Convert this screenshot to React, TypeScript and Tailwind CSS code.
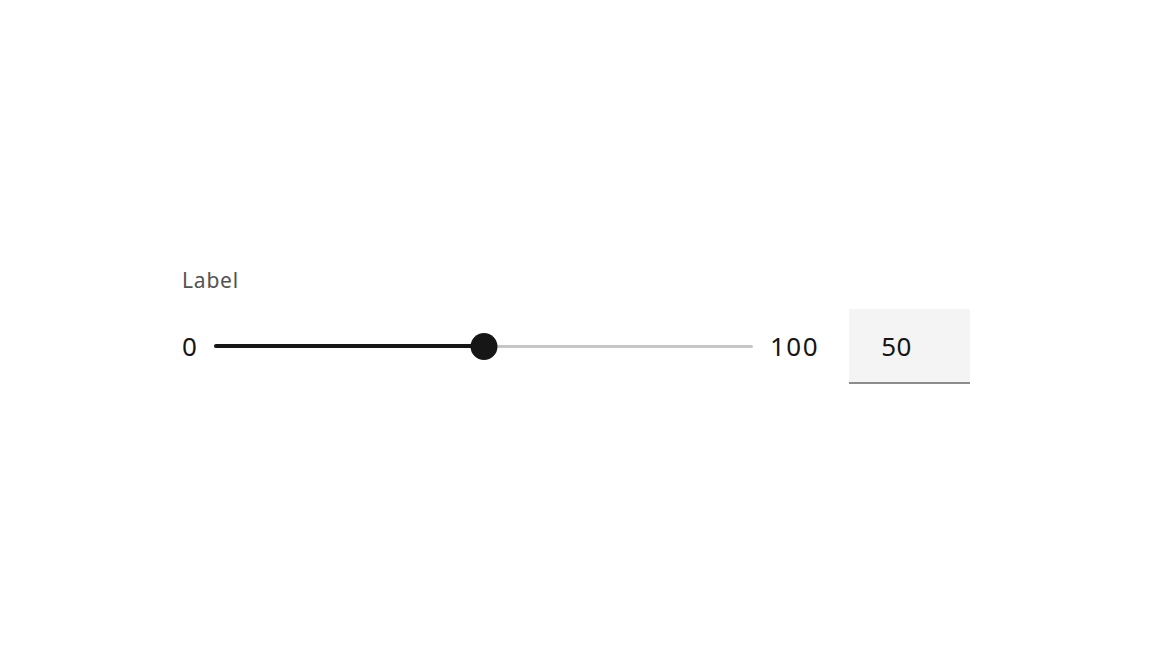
import React from "react";

export default function App() {
  const value = 50;
  const pct = value / 100;
  return (
    <div
      className="w-[1152px] h-[648px] bg-white pl-[182px] pt-[264px]"
      style={{ fontFamily: '"Noto Sans", "Liberation Sans", sans-serif' }}
    >
      <div className="text-[21px] leading-[32px] tracking-[0.8px] text-[#525252]">Label</div>
      <div className="mt-[13px] flex items-center">
        <span className="w-[16px] -translate-y-[1px] text-[26px] leading-none text-[#161616]">0</span>
        <div className="relative ml-[16px] h-[28px] w-[539px]">
          <div className="absolute left-0 right-0 top-[12px] h-[3.5px] rounded-full bg-[#c6c6c6]" />
          <div
            className="absolute left-0 top-[11.5px] h-[4px] rounded-full bg-[#161616]"
            style={{ width: `${pct * 100}%` }}
          />
          <div
            className="absolute top-[0px] h-[27px] w-[27px] -translate-x-1/2 rounded-full bg-[#161616]"
            style={{ left: `${pct * 100}%` }}
          />
        </div>
        <span className="ml-[17px] -translate-y-[1px] text-[26px] leading-none tracking-[1.5px] text-[#161616]">100</span>
        <div className="ml-[30px] flex h-[75px] w-[121px] items-center border-b-2 border-[#8d8d8d] bg-[#f4f4f4] pl-[32px] text-[26px] tracking-[0.5px] text-[#161616]">
          <span className="translate-y-[1px]">50</span>
        </div>
      </div>
    </div>
  );
}
